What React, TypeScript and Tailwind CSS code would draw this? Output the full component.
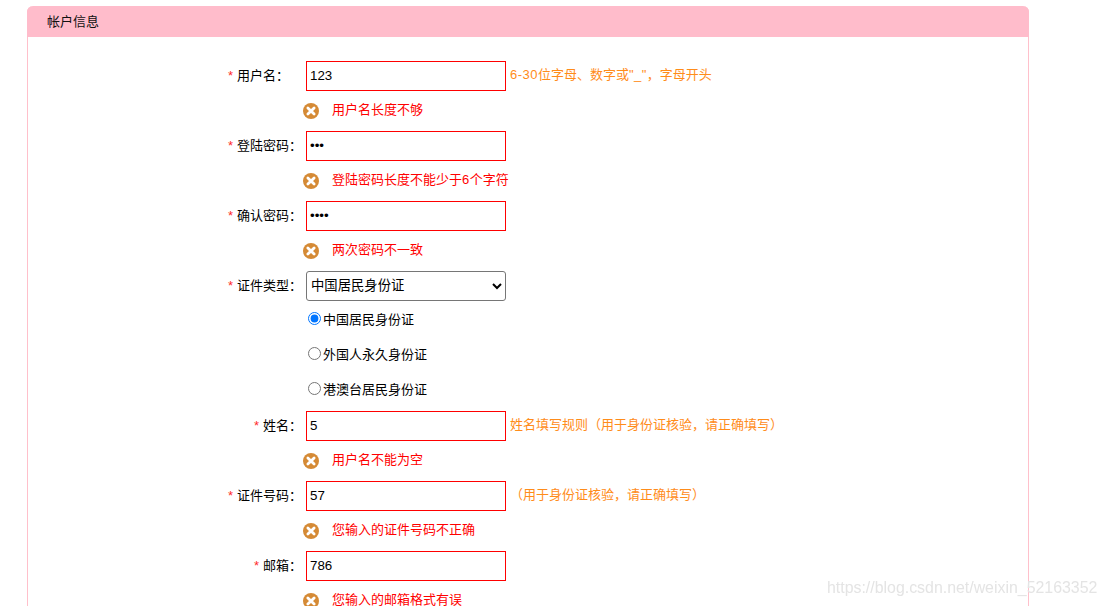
import React from 'react'

function ErrorIcon() {
  return (
    <svg width="16" height="16" viewBox="0 0 16 16" className="shrink-0">
      <circle cx="8" cy="8" r="8" fill="#d58a35" />
      <path d="M4.9 4.9l6.2 6.2M11.1 4.9l-6.2 6.2" stroke="#fff" strokeWidth="2.8" strokeLinecap="round" />
    </svg>
  )
}

function Label({ text, pad }: { text: string; pad?: boolean }) {
  return (
    <div className={`w-[274px] shrink-0 text-right text-black leading-[29px] ${pad ? 'pr-[13px]' : ''}`}>
      <span className="text-[#ff2a2a] mr-[4px]">*</span>
      {text}：
    </div>
  )
}

function TextRow({ label, value, type = 'text', hint, pad }: { label: string; value: string; type?: string; hint?: React.ReactNode; pad?: boolean }) {
  return (
    <div className="flex h-[35px] items-start">
      <Label text={label} pad={pad} />
      <input
        type={type}
        defaultValue={value}
        className="ml-[4px] w-[200px] h-[30px] border border-[#ff0000] pl-[3px] pr-[2px] pb-[2px] text-[13.33px] text-black outline-none font-['Liberation_Sans',sans-serif]"
      />
      {hint && <span className="ml-[4px] leading-[28px] text-[#ff8c1a]">{hint}</span>}
    </div>
  )
}

function ErrorRow({ text }: { text: React.ReactNode }) {
  return (
    <div className="flex h-[35px] items-start pl-[275px] pt-[7px]">
      <ErrorIcon />
      <span className="ml-[13px] text-[#ff0000] leading-[14px]">{text}</span>
    </div>
  )
}

function RadioRow({ text, checked }: { text: string; checked?: boolean }) {
  return (
    <label className="flex h-[35px] items-start pl-[280px] pt-[6px]">
      <input type="radio" name="idType" defaultChecked={checked} className="w-[13px] h-[13px] shrink-0" />
      <span className="ml-[2px] text-black leading-[16px]">{text}</span>
    </label>
  )
}

export default function App() {
  return (
    <div className="relative h-[606px] overflow-hidden bg-white pt-[6px] pl-[27px] text-[13px] font-['Liberation_Sans','Noto_Sans_CJK_SC',sans-serif]">
      <div className="w-[1002px] h-[700px] rounded-t-[6px] border-x border-[#ffc0cb]">
        <div className="h-[31px] -mx-px bg-[#ffbccb] rounded-t-[6px] pl-[20px] leading-[31px] text-[#111]">帐户信息</div>
        <div className="pt-[24px]">
          <TextRow
            label="用户名"
            value="123"
            hint={<><span className="tracking-[0.5px]">6-30</span>位字母、数字或<span className="tracking-[0.4px]">"_"</span>，字母开头</>}
            pad
          />
          <ErrorRow text="用户名长度不够" />
          <TextRow label="登陆密码" value="123" type="password" />
          <ErrorRow text={<>登陆密码长度不能少于<span className="tracking-[0.5px]">6</span>个字符</>} />
          <TextRow label="确认密码" value="1234" type="password" />
          <ErrorRow text="两次密码不一致" />
          <div className="flex h-[35px] items-start">
            <Label text="证件类型" />
            <select className="ml-[4px] w-[200px] h-[30px] border border-[#767676] rounded-[3px] text-[13.33px] text-black pb-[2px]">
              <option>中国居民身份证</option>
              <option>外国人永久身份证</option>
              <option>港澳台居民身份证</option>
            </select>
          </div>
          <RadioRow text="中国居民身份证" checked />
          <RadioRow text="外国人永久身份证" />
          <RadioRow text="港澳台居民身份证" />
          <TextRow label="姓名" value="5" hint="姓名填写规则（用于身份证核验，请正确填写）" />
          <ErrorRow text="用户名不能为空" />
          <TextRow label="证件号码" value="57" hint="（用于身份证核验，请正确填写）" />
          <ErrorRow text="您输入的证件号码不正确" />
          <TextRow label="邮箱" value="786" />
          <ErrorRow text="您输入的邮箱格式有误" />
        </div>
      </div>
      <div className="absolute left-[827px] top-[577px] text-[15.9px] leading-[22px] text-[#e4e4e4] blur-[0.5px] font-['Liberation_Sans',sans-serif]">
        https://blog.csdn.net/weixin_52163352
      </div>
    </div>
  )
}
